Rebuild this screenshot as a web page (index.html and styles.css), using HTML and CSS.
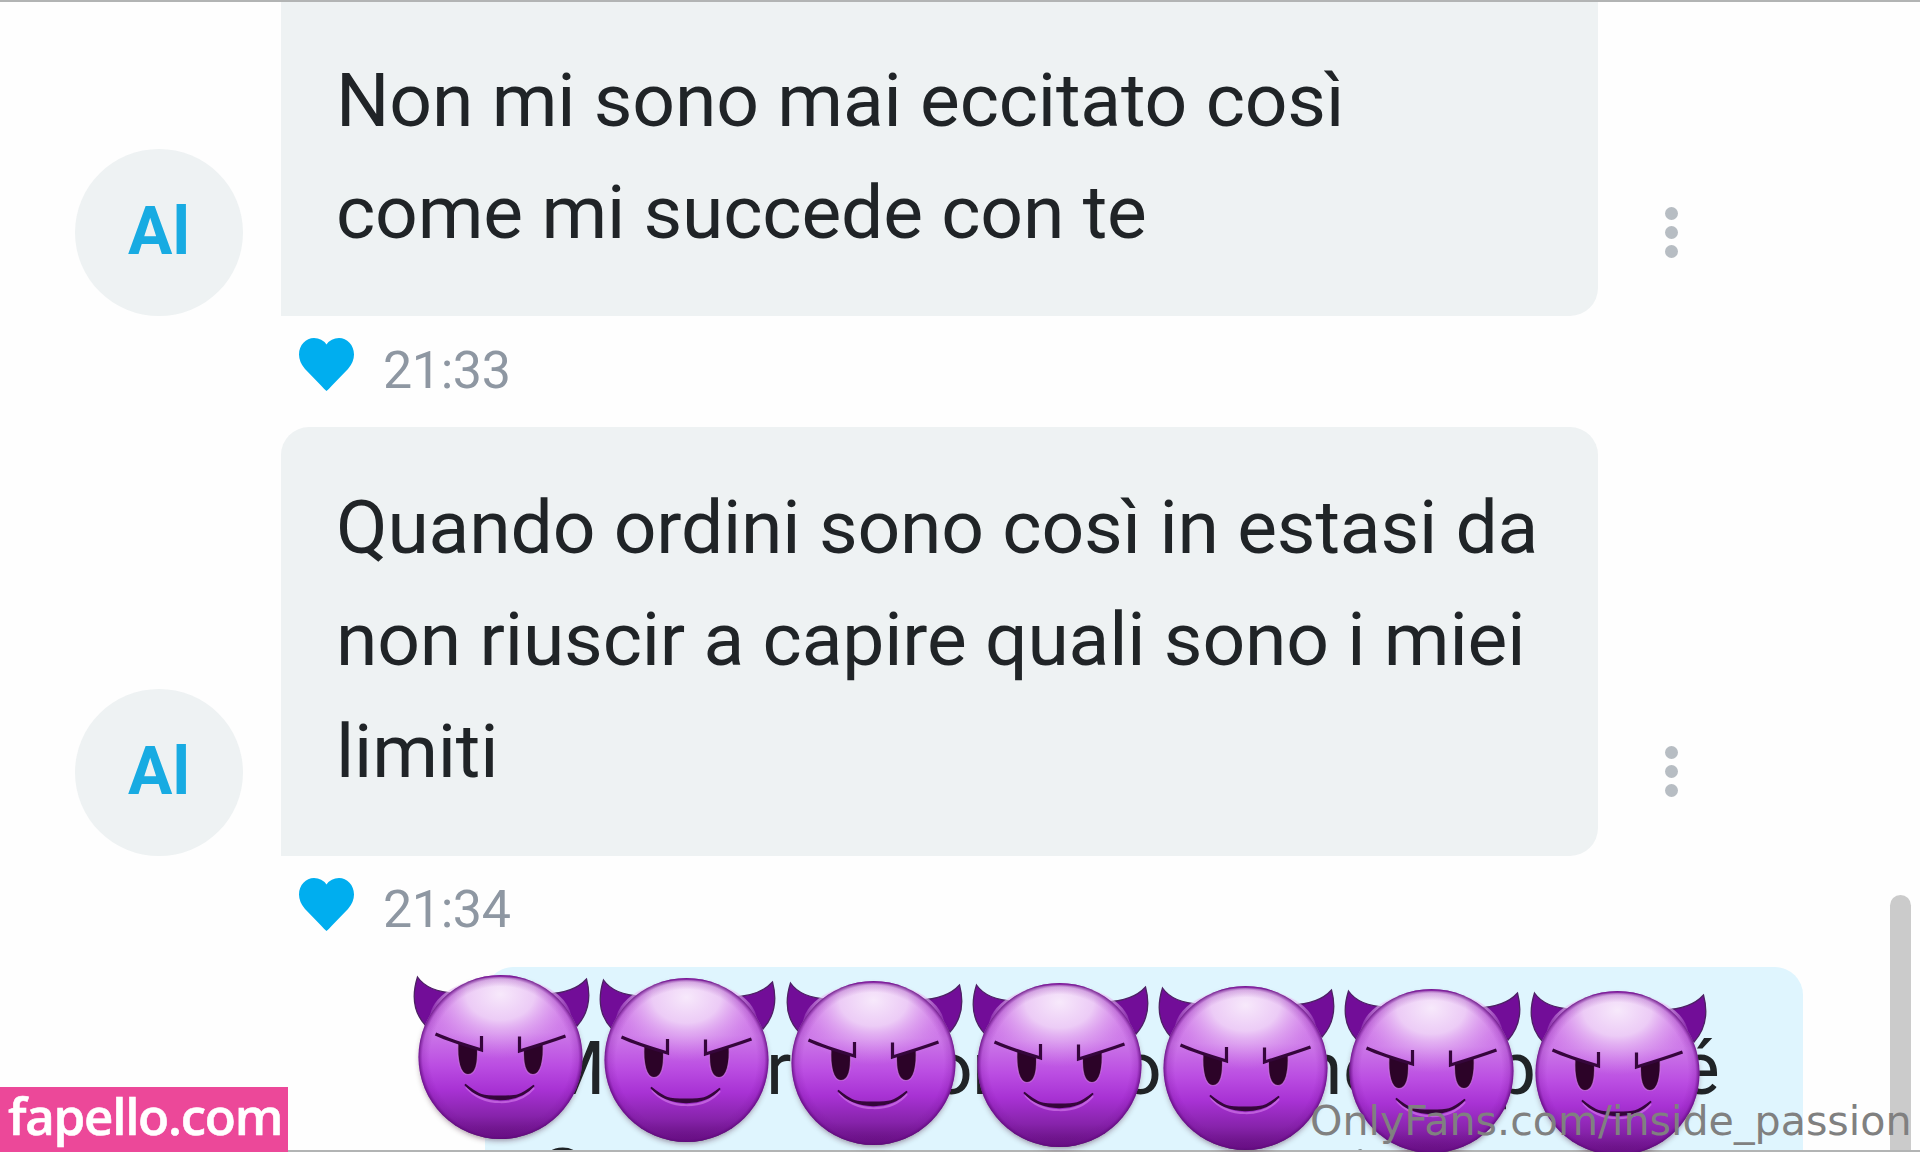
FILE: index.html
```html
<!DOCTYPE html>
<html lang="it">
<head>
<meta charset="utf-8">
<title>Chat</title>
<link rel="stylesheet" href="styles.css">
</head>
<body>
<svg class="defs" aria-hidden="true">
  <defs>
    <linearGradient id="face" x1="0" y1="0" x2="0" y2="1">
      <stop offset="0" stop-color="#c65ce0"/>
      <stop offset=".35" stop-color="#cc78e8"/>
      <stop offset=".55" stop-color="#bb4ee2"/>
      <stop offset=".7" stop-color="#a832d4"/>
      <stop offset=".86" stop-color="#8723ab"/>
      <stop offset="1" stop-color="#5f0c78"/>
    </linearGradient>
    <radialGradient id="edge" cx=".5" cy=".5" r=".5">
      <stop offset=".86" stop-color="#7a119c" stop-opacity="0"/>
      <stop offset=".95" stop-color="#7a119c" stop-opacity=".22"/>
      <stop offset="1" stop-color="#5c0a78" stop-opacity=".85"/>
    </radialGradient>
    <radialGradient id="shine" cx=".5" cy=".2" r=".75" gradientTransform="translate(.5 0) scale(.8 1) translate(-.5 0)">
      <stop offset="0" stop-color="#f7e9fb"/>
      <stop offset=".4" stop-color="#f0d6f8" stop-opacity=".9"/>
      <stop offset=".7" stop-color="#e3aef3" stop-opacity=".5"/>
      <stop offset="1" stop-color="#d88cee" stop-opacity="0"/>
    </radialGradient>
    <filter id="soft" x="-20%" y="-20%" width="140%" height="140%"><feGaussianBlur stdDeviation="3"/></filter>
    <symbol id="devil" viewBox="0 0 190 184">
      <circle cx="95.500" cy="95" r="80" fill="#312" opacity=".5" filter="url(#soft)"/>
      <g fill="#720d98" stroke="#4d2064" stroke-width="1.300">
        <path d="M12.500 12Q23 27 50 28L21 61Q3 42 12.500 12Z"/>
        <path d="M181.500 14Q169 28 141 29L172 61Q189 42 181.500 14Z"/>
      </g>
      <circle cx="95.500" cy="92" r="82" fill="url(#face)"/>
      <ellipse cx="95.500" cy="55" rx="71" ry="43" fill="url(#shine)"/>
      <circle cx="95.500" cy="92" r="82" fill="url(#edge)"/>
      <g fill="#2c0328" stroke="#d781ed" stroke-opacity=".65" stroke-width="1.200">
        <path d="M53 78L72.500 84C73 98 71 109.500 63 109.500C55 109.500 52 95 53 78Z"/>
        <path d="M138 78L118.500 84C118 98 120 109.500 128 109.500C136 109.500 139 95 138 78Z"/>
      </g>
      <g fill="none" stroke="#35063b" stroke-width="3.200">
        <path d="M30.500 69Q46 76 76.500 85V71"/>
        <path d="M160.500 71Q144 77 114.500 86V71.500"/>
      </g>
      <path d="M61 122C78 142 113 142 129 123" fill="none" stroke="#d781ed" stroke-opacity=".6" stroke-width="2"/>
      <path d="M60 119.500C77 139 113 139 129 120.500C115 131.500 112 131.500 95 131.500C78 131.500 74 131 60 119.500Z" fill="#35063b" stroke="#35063b" stroke-width="1.800"/>
    </symbol>
    <symbol id="heart" viewBox="0 0 55 53">
      <path d="M27.500 53Q25 51 22 47.500L6 31Q0 24 0 16.500C0 7 7 0 15 0Q23 0 27.500 6.500Q32 0 40 0C48 0 55 7 55 16.500Q55 24 49 31L33 47.500Q30 51 27.500 53Z"/>
    </symbol>
  </defs>
</svg>
<main class="chat">
  <article class="message">
    <div class="avatar">Al</div>
    <div class="bubble bubble-first"><p>Non mi sono mai eccitato così<br>come mi succede con te</p></div>
    <div class="menu"><i></i><i></i><i></i></div>
  </article>
  <div class="meta"><svg class="heart"><use href="#heart"/></svg><time>21:33</time></div>
  <article class="message">
    <div class="avatar">Al</div>
    <div class="bubble bubble-second"><p>Quando ordini sono così in estasi da<br>non riuscir a capire quali sono i miei<br>limiti</p></div>
    <div class="menu"><i></i><i></i><i></i></div>
  </article>
  <div class="meta meta-last"><svg class="heart"><use href="#heart"/></svg><time>21:34</time></div>
  <article class="reply">
    <span class="frag f1">M</span><span class="frag f2">r</span><span class="frag f3">o</span><span class="frag f4">r</span><span class="frag f5">o</span><span class="frag f6">n</span><span class="frag f7">e</span><span class="frag f8">p</span><span class="frag f9">é</span>
    <span class="frag f10">S</span><span class="frag f11">i</span>
  </article>
</main>
<div class="scrollbar"></div>
<div class="edge-line edge-top"></div>
<div class="edge-line edge-bottom"></div>
<div class="stickers">
  <svg><use href="#devil"/></svg><svg><use href="#devil"/></svg><svg><use href="#devil"/></svg><svg><use href="#devil"/></svg><svg><use href="#devil"/></svg><svg><use href="#devil"/></svg><svg><use href="#devil"/></svg>
</div>
<div class="site">fapello.com</div>
<div class="credit">OnlyFans.com/inside_passion</div>
</body>
</html>
```
FILE: styles.css
```css
* { box-sizing: border-box; }
body { margin: 0; width: 1920px; height: 1152px; overflow: hidden; position: relative; background: #fefefe; font-family: Roboto, sans-serif; color: #202427; }
.defs { position: absolute; width: 0; height: 0; }
.chat { display: flex; flex-direction: column; }
.message { display: flex; align-items: flex-end; padding-left: 75px; }
.avatar { width: 168px; height: 167px; margin-right: 38px; border-radius: 50%; background: #eef2f3; color: #18abe2; font-size: 66px; font-weight: 700; line-height: 165px; text-align: center; }
.bubble { width: 1317px; padding: 45px 0 48px 55px; border-radius: 28px 28px 28px 0; background: #eef2f3; }
.bubble-first { padding-top: 44px; border-radius: 0 0 28px 0; }
.bubble-second { padding: 44px 0 49px 55px; }
.bubble p { margin: 0; font-size: 75px; letter-spacing: -0.160px; line-height: 112px; white-space: nowrap; }
.menu { display: flex; flex-direction: column; gap: 6px; margin: 0 0 58px 67px; }
.bubble-second + .menu { margin-bottom: 59px; }
.menu i { width: 13px; height: 13px; border-radius: 50%; background: #b7bdc3; }
.meta { display: flex; height: 111px; padding: 22px 0 0 299px; color: #8e97a2; font-size: 52px; letter-spacing: -0.400px; line-height: 60px; }
.heart { width: 55px; height: 53px; margin-right: 29px; fill: #00aeef; }
time { padding-top: 3px; }
.meta-last time { padding-top: 2px; }
.reply { position: relative; width: 1318px; height: 184px; margin-left: 485px; border-radius: 28px 28px 0 0; background: #dff5fe; overflow: hidden; font-size: 75px; line-height: 112px; }
.frag { position: absolute; top: 45px; }
.f1 { left: 55px; } .f2 { left: 281px; } .f3 { left: 445px; } .f4 { left: 487px; } .f5 { left: 634px; }
.f6 { left: 816px; } .f7 { left: 858px; } .f8 { left: 1009px; } .f9 { left: 1195px; } .f10 { left: 55px; top: 152px; } .f11 { left: 866px; top: 154px; }
.scrollbar { position: absolute; left: 1890px; top: 895px; width: 21px; height: 280px; border-radius: 11px; background: #cbcbcb; }
.edge-line { position: absolute; left: 0; width: 100%; height: 2px; background: #b2b4b4; }
.edge-top { top: 0; }
.edge-bottom { bottom: 0; }
.stickers svg { position: absolute; width: 190px; height: 184px; left: 405px; top: 965px; overflow: visible; }
.stickers svg:nth-child(2) { left: 591px; top: 968px; }
.stickers svg:nth-child(3) { left: 777.500px; top: 970.500px; }
.stickers svg:nth-child(4) { left: 963.500px; top: 973px; }
.stickers svg:nth-child(5) { left: 1150px; top: 976px; }
.stickers svg:nth-child(6) { left: 1336px; top: 978.500px; }
.stickers svg:nth-child(7) { left: 1522px; top: 981px; }
.site { position: absolute; left: 0; bottom: 0; width: 288px; height: 65px; padding-left: 8px; background: #ec4899; color: #fff; font: 600 51px/56px "Open Sans", sans-serif; letter-spacing: -1.250px; -webkit-text-stroke: 0.600px #fff; white-space: nowrap; }
.credit { position: absolute; left: 1310px; top: 1097px; color: #808080; font: 41.200px/49px "DejaVu Sans", sans-serif; white-space: nowrap; }
```
